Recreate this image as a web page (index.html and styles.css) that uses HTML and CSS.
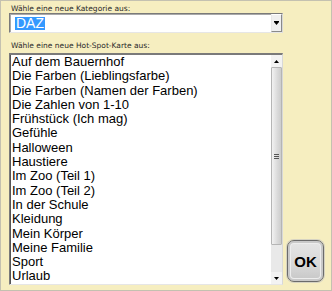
FILE: index.html
```html
<!DOCTYPE html>
<html>
<head>
<meta charset="utf-8">
<link rel="stylesheet" href="styles.css">
</head>
<body>
<div class="panel">
  <div class="label">Wähle eine neue Kategorie aus:</div>
  <div class="combo">
    <div class="combo-field"><span class="sel">DAZ</span></div>
    <div class="drop"><svg width="5" height="4" viewBox="0 0 5 4"><rect x="0" y="0" width="5" height="1" fill="#000"/><polygon points="0,1 5,1 2.5,4" fill="#000"/></svg></div>
  </div>
  <div class="label label2">Wähle eine neue Hot-Spot-Karte aus:</div>
  <div class="bottom">
    <div class="list">
      <ul class="items">
        <li>Auf dem Bauernhof</li>
        <li>Die Farben (Lieblingsfarbe)</li>
        <li>Die Farben (Namen der Farben)</li>
        <li>Die Zahlen von 1-10</li>
        <li>Frühstück (Ich mag)</li>
        <li>Gefühle</li>
        <li>Halloween</li>
        <li>Haustiere</li>
        <li>Im Zoo (Teil 1)</li>
        <li>Im Zoo (Teil 2)</li>
        <li>In der Schule</li>
        <li>Kleidung</li>
        <li>Mein Körper</li>
        <li>Meine Familie</li>
        <li>Sport</li>
        <li>Urlaub</li>
      </ul>
      <div class="scroll">
        <div class="arrow up"><svg width="5" height="3" viewBox="0 0 5 3"><polygon points="0,3 5,3 2.5,0" fill="#000"/></svg></div>
        <div class="thumb"><div class="grip"><span></span><span></span><span></span></div></div>
        <div class="track"></div>
        <div class="arrow down"><svg width="5" height="3" viewBox="0 0 5 3"><polygon points="0,0 5,0 2.5,3" fill="#000"/></svg></div>
      </div>
    </div>
    <button class="ok">OK</button>
  </div>
</div>
</body>
</html>
```
FILE: styles.css
```css
html, body {
  margin: 0;
  padding: 0;
  background: #f6eec0;
}
.panel {
  box-sizing: border-box;
  width: 332px;
  height: 291px;
  border: 1px solid #c4c1b0;
  background: #f6eec0;
  padding: 3px 0 0 8px;
  display: flex;
  flex-direction: column;
}
.label {
  font-family: "DejaVu Sans", sans-serif;
  font-size: 7.5px;
  line-height: 9px;
  height: 9px;
  color: #2a2a2a;
  padding-left: 2px;
  white-space: nowrap;
}
.label2 {
  margin-top: 8px;
}
.combo {
  box-sizing: border-box;
  width: 274px;
  height: 20px;
  display: flex;
  border-top: 1px solid #7a7a7a;
  border-left: 1px solid #7a7a7a;
  border-right: 1px solid #d8d8d8;
  border-bottom: 1px solid #e6e6e6;
  background: #fff;
}
.combo-field {
  flex: 1;
  display: flex;
  align-items: center;
  padding-left: 5px;
  box-shadow: inset 1px 1px 0 #a9a9a9;
}
.sel {
  font-family: "Liberation Sans", Arial, sans-serif;
  font-size: 14px;
  line-height: 13px;
  height: 13px;
  background: #3399ff;
  color: #fff;
  padding: 0 1px;
  margin-top: 1px;
}
.drop {
  box-sizing: border-box;
  width: 11px;
  display: flex;
  align-items: center;
  justify-content: center;
  background: #f0f0f0;
  border-left: 1px solid #e8e8e8;
  border-right: 1px solid #8a8a8a;
  border-bottom: 1px solid #8a8a8a;
  border-top: 1px solid #fff;
}
.bottom {
  display: flex;
  align-items: flex-end;
  gap: 4px;
  margin-top: 3px;
}
.list {
  box-sizing: border-box;
  width: 274px;
  height: 232px;
  display: flex;
  background: #fff;
  border-top: 2px solid #7a7a7a;
  border-left: 1px solid #7a7a7a;
  border-right: 1px solid #d8d8d8;
  border-bottom: 1px solid #e6e6e6;
  box-shadow: inset 1px 0 0 #555;
  overflow: hidden;
}
.items {
  flex: 1;
  list-style: none;
  margin: 0;
  padding: 0 0 0 2px;
  font-family: "Liberation Sans", Arial, sans-serif;
  font-size: 13px;
  line-height: 14.3px;
  color: #000;
  overflow: hidden;
}
.items li {
  white-space: nowrap;
}
.scroll {
  width: 11px;
  display: flex;
  flex-direction: column;
  background: #ececec;
}
.arrow {
  height: 12px;
  display: flex;
  align-items: center;
  justify-content: center;
  background: #f3f3f3;
}
.thumb {
  box-sizing: border-box;
  height: 178px;
  border: 1px solid #b5b5b5;
  border-radius: 1px;
  background: linear-gradient(to right, #f2f2f2, #dadada 60%, #cdcdcd);
  display: flex;
  align-items: center;
  justify-content: center;
}
.grip {
  display: flex;
  flex-direction: column;
  gap: 1px;
}
.grip span {
  display: block;
  width: 5px;
  height: 1px;
  background: #555;
}
.track {
  flex: 1;
  background: #e9e9e9;
}
.ok {
  box-sizing: border-box;
  width: 37px;
  height: 42px;
  margin: 0 0 3px 0;
  padding: 0;
  border: 1px solid #6b6b6b;
  border-radius: 7px;
  background: linear-gradient(#e6e6e6, #d8d8d8 60%, #c6c6c6);
  box-shadow: inset 0 0 0 2px #c9c9c9, inset 0 0 0 3px #ededed, 0 0 0 1px #d6d3c2;
  font-family: "Liberation Sans", Arial, sans-serif;
  font-weight: bold;
  font-size: 15px;
  color: #000;
}
```
